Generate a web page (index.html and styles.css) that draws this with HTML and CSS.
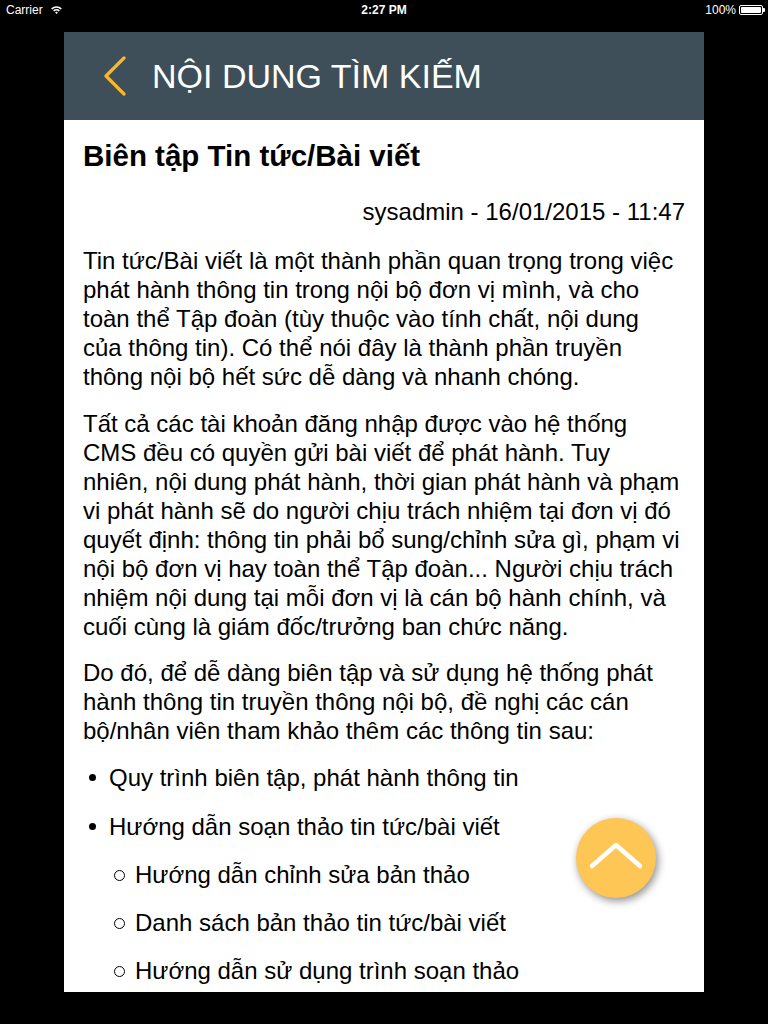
FILE: index.html
```html
<!DOCTYPE html>
<html lang="vi">
<head>
<meta charset="utf-8">
<title>Nội dung tìm kiếm</title>
<link rel="stylesheet" href="styles.css">
</head>
<body>
<div class="status">
  <div class="status-left">
    <span>Carrier</span>
    <svg class="wifi" width="13" height="10" viewBox="0 0 12 10">
      <path d="M0.6 3.4 A7.6 7.6 0 0 1 11.4 3.4 L10.2 4.6 A5.9 5.9 0 0 0 1.8 4.6 Z" fill="#fff"/>
      <path d="M2.6 5.4 A4.8 4.8 0 0 1 9.4 5.4 L8.2 6.6 A3.1 3.1 0 0 0 3.8 6.6 Z" fill="#fff"/>
      <path d="M4.6 7.4 A2 2 0 0 1 7.4 7.4 L6 8.9 Z" fill="#fff"/>
    </svg>
  </div>
  <div class="status-center">2:27 PM</div>
  <div class="status-right">
    <span>100%</span>
    <span class="battery"><span class="battery-fill"></span></span>
    <span class="battery-tip"></span>
  </div>
</div>
<div class="panel">
  <header class="topbar">
    <svg class="back" width="26" height="40" viewBox="0 0 26 40">
      <path d="M22 2 L4 20 L22 38" fill="none" stroke="#f9b82a" stroke-width="3.2" stroke-linecap="round" stroke-linejoin="round"/>
    </svg>
    <h1 class="topbar-title">NỘI DUNG TÌM KIẾM</h1>
  </header>
  <main class="content">
    <h2 class="title">Biên tập Tin tức/Bài viết</h2>
    <div class="meta">sysadmin - 16/01/2015 - 11:47</div>
    <p class="para first">Tin tức/Bài viết là một thành phần quan trọng trong việc phát hành thông tin trong nội bộ đơn vị mình, và cho toàn thể Tập đoàn (tùy thuộc vào tính chất, nội dung của thông tin). Có thể nói đây là thành phần truyền thông nội bộ hết sức dễ dàng và nhanh chóng.</p>
    <p class="para">Tất cả các tài khoản đăng nhập được vào hệ thống CMS đều có quyền gửi bài viết để phát hành. Tuy nhiên, nội dung phát hành, thời gian phát hành và phạm vi phát hành sẽ do người chịu trách nhiệm tại đơn vị đó quyết định: thông tin phải bổ sung/chỉnh sửa gì, phạm vi nội bộ đơn vị hay toàn thể Tập đoàn... Người chịu trách nhiệm nội dung tại mỗi đơn vị là cán bộ hành chính, và cuối cùng là giám đốc/trưởng ban chức năng.</p>
    <p class="para">Do đó, để dễ dàng biên tập và sử dụng hệ thống phát hành thông tin truyền thông nội bộ, đề nghị các cán bộ/nhân viên tham khảo thêm các thông tin sau:</p>
    <ul class="list">
      <li class="item">Quy trình biên tập, phát hành thông tin</li>
      <li class="item">Hướng dẫn soạn thảo tin tức/bài viết
        <ul class="sublist">
          <li class="subitem">Hướng dẫn chỉnh sửa bản thảo</li>
          <li class="subitem">Danh sách bản thảo tin tức/bài viết</li>
          <li class="subitem">Hướng dẫn sử dụng trình soạn thảo</li>
        </ul>
      </li>
    </ul>
  </main>
  <button class="fab" type="button" aria-label="Lên đầu trang">
    <svg width="56" height="30" viewBox="0 0 56 30">
      <path d="M4 25 L28 4 L52 25" fill="none" stroke="#fff" stroke-width="4.5" stroke-linecap="round" stroke-linejoin="round"/>
    </svg>
  </button>
</div>
</body>
</html>
```
FILE: styles.css
```css
* { box-sizing: border-box; }
html, body { margin: 0; padding: 0; }
body {
  background: #000;
  width: 768px;
  height: 1024px;
  overflow: hidden;
  font-family: "Liberation Sans", Arial, sans-serif;
  color: #000;
}
.status {
  height: 20px;
  display: flex;
  align-items: center;
  justify-content: space-between;
  color: #fff;
  font-size: 12px;
  padding: 0 3px 0 6px;
  position: relative;
}
.status-left { display: flex; align-items: center; gap: 7px; }
.wifi { display: block; }
.status-center {
  position: absolute;
  left: 0; right: 0;
  text-align: center;
  font-weight: bold;
  pointer-events: none;
}
.status-right { display: flex; align-items: center; }
.status-right span:first-child { margin-right: 3px; }
.battery {
  width: 24px; height: 10px;
  border: 1px solid #fff;
  border-radius: 2px;
  padding: 1px;
  display: block;
}
.battery-fill { display: block; width: 100%; height: 100%; background: #fff; border-radius: 1px; }
.battery-tip { width: 2px; height: 4px; background: #fff; display: block; border-radius: 0 1px 1px 0; }

.panel {
  position: relative;
  margin: 12px 0 0 64px;
  width: 640px;
  height: 960px;
  background: #fff;
  overflow: hidden;
}
.topbar {
  height: 88px;
  background: #3e4f59;
  display: flex;
  align-items: center;
  padding-left: 38px;
}
.back { display: block; margin-right: 24px; }
.topbar-title {
  margin: 0;
  color: #fff;
  font-weight: normal;
  font-size: 34px;
  line-height: 40px;
}
.content {
  padding: 20px 22px 0 19px;
  font-size: 24px;
  line-height: 29px;
}
.title {
  margin: 0;
  font-size: 29.5px;
  line-height: 32px;
  font-weight: bold;
}
.meta {
  margin-top: 25px;
  margin-right: -3px;
  text-align: right;
}
.para { margin: 17.5px 0 0; }
.para.first { margin-top: 20px; }
.list, .sublist { list-style: none; margin: 0; padding: 0; }
.list { margin-top: 18px; padding-left: 26px; }
.item { position: relative; margin-bottom: 20px; }
.item::before {
  content: "";
  position: absolute;
  left: -20px;
  top: 11px;
  width: 7px; height: 7px;
  border-radius: 50%;
  background: #000;
}
.sublist { margin-top: 19px; padding-left: 26px; }
.subitem { position: relative; margin-bottom: 19px; }
.subitem::before {
  content: "";
  position: absolute;
  left: -21px;
  top: 10px;
  width: 9px; height: 9px;
  border-radius: 50%;
  border: 1px solid #000;
}
.fab {
  position: absolute;
  left: 512px;
  top: 786px;
  width: 80px; height: 80px;
  border-radius: 50%;
  border: none;
  background: #fdc655;
  box-shadow: 2px 3px 8px rgba(0,0,0,0.45);
  display: flex;
  align-items: center;
  justify-content: center;
  padding: 0 0 4px 0;
}
.fab svg { display: block; }
```
